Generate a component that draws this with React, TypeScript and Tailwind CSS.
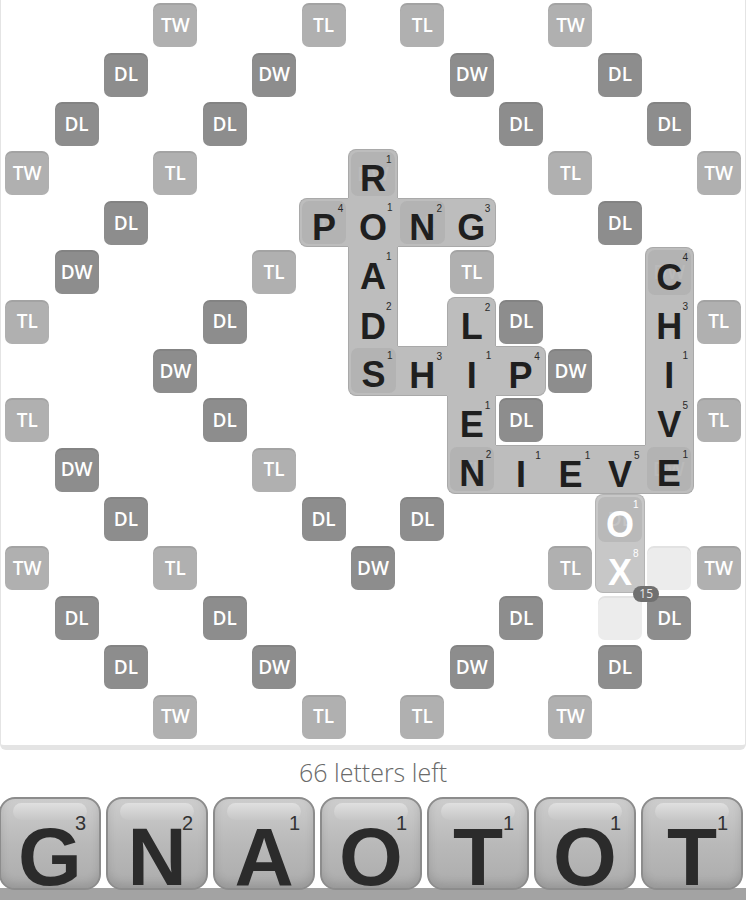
import clsx from 'clsx';

type Prem = 'TW' | 'TL' | 'DW' | 'DL' | 'ST';

interface Tile {
  l: string;
  v: number;
  fresh?: boolean;
}

const key = (r: number, c: number) => `${r},${c}`;

const premiums: Record<string, Prem> = {};
const addPrem = (p: Prem, list: [number, number][]) =>
  list.forEach(([r, c]) => (premiums[key(r, c)] = p));

addPrem('TW', [[0, 3], [0, 11], [3, 0], [3, 14], [11, 0], [11, 14], [14, 3], [14, 11]]);
addPrem('TL', [
  [0, 6], [0, 8], [3, 3], [3, 11], [5, 5], [5, 9], [6, 0], [6, 14],
  [8, 0], [8, 14], [9, 5], [9, 9], [11, 3], [11, 11], [14, 6], [14, 8],
]);
addPrem('DW', [
  [1, 5], [1, 9], [3, 7], [5, 1], [5, 13], [7, 3], [7, 11], [9, 1],
  [9, 13], [11, 7], [13, 5], [13, 9],
]);
addPrem('DL', [
  [1, 2], [1, 12], [2, 1], [2, 4], [2, 10], [2, 13], [4, 2], [4, 6],
  [4, 8], [4, 12], [6, 4], [6, 10], [8, 4], [8, 10], [10, 2], [10, 6],
  [10, 8], [10, 12], [12, 1], [12, 4], [12, 10], [12, 13], [13, 2], [13, 12],
]);
addPrem('ST', [[7, 7]]);

const tiles: Record<string, Tile> = {};
const place = (r: number, c: number, l: string, v: number, fresh = false) =>
  (tiles[key(r, c)] = { l, v, fresh });

place(3, 7, 'R', 1);
place(4, 6, 'P', 4);
place(4, 7, 'O', 1);
place(4, 8, 'N', 2);
place(4, 9, 'G', 3);
place(5, 7, 'A', 1);
place(6, 7, 'D', 2);
place(7, 7, 'S', 1);
place(7, 8, 'H', 3);
place(7, 9, 'I', 1);
place(7, 10, 'P', 4);
place(6, 9, 'L', 2);
place(8, 9, 'E', 1);
place(9, 9, 'N', 2);
place(9, 10, 'I', 1);
place(9, 11, 'E', 1);
place(9, 12, 'V', 5);
place(9, 13, 'E', 1);
place(5, 13, 'C', 4);
place(6, 13, 'H', 3);
place(7, 13, 'I', 1);
place(8, 13, 'V', 5);
place(10, 12, 'O', 1, true);
place(11, 12, 'X', 8, true);

const placeholders = new Set([key(11, 13), key(12, 12)]);

const rack: Tile[] = [
  { l: 'G', v: 3 },
  { l: 'N', v: 2 },
  { l: 'A', v: 1 },
  { l: 'O', v: 1 },
  { l: 'T', v: 1 },
  { l: 'O', v: 1 },
  { l: 'T', v: 1 },
];

function PremiumSquare({ p }: { p: Prem }) {
  if (p === 'ST') return null;
  const dark = p === 'DL' || p === 'DW';
  return (
    <div className="w-full h-full flex items-center justify-center">
      <div
        className={clsx(
          'w-[44px] h-[44px] rounded-[7px] flex items-center justify-center text-white text-[19px] font-semibold shadow-[inset_0_2px_0_rgba(0,0,0,0.07)]',
          dark ? 'bg-[#8d8d8d]' : 'bg-[#b0b0b0]'
        )}
        style={{ fontFamily: '"Open Sans", sans-serif' }}
      >
        {p}
      </div>
    </div>
  );
}

function TileCell({ r, c, t }: { r: number; c: number; t: Tile }) {
  const same = (rr: number, cc: number) => {
    const n = tiles[key(rr, cc)];
    return !!n && !!n.fresh === !!t.fresh;
  };
  const up = same(r - 1, c);
  const down = same(r + 1, c);
  const left = same(r, c - 1);
  const right = same(r, c + 1);
  const under = premiums[key(r, c)];

  return (
    <div
      className={clsx(
        'relative flex items-center justify-center pt-[10px]',
        t.fresh ? 'bg-[#c7c7c7] border-[#b4b4b4]' : 'bg-[#bdbdbd] border-[#a9a9a9]',
        !up && 'border-t',
        !down && 'border-b',
        !left && 'border-l',
        !right && 'border-r',
        !up && !left && 'rounded-tl-[8px]',
        !up && !right && 'rounded-tr-[8px]',
        !down && !left && 'rounded-bl-[8px]',
        !down && !right && 'rounded-br-[8px]'
      )}
      style={{ fontFamily: '"Liberation Sans", Arial, sans-serif' }}
    >
      {under && (
        <div
          className={clsx(
            'absolute inset-[2px] rounded-[7px] flex items-center justify-center text-[19px] font-semibold',
            t.fresh ? 'bg-[#b9b9b9] text-[#c4c4c4]' : 'bg-[#b3b3b3] text-[#bababa]'
          )}
          style={{ fontFamily: '"Open Sans", sans-serif' }}
        >
          {under === 'ST' ? '' : under}
        </div>
      )}
      <span
        className={clsx(
          'relative text-[36px] font-bold leading-none',
          t.fresh ? 'text-white' : 'text-[#1f1f1f]'
        )}
      >
        {t.l}
      </span>
      <span
        className={clsx(
          'absolute top-[5px] right-[5px] text-[10px] leading-none',
          t.fresh ? 'text-white' : 'text-[#2a2a2a]'
        )}
      >
        {t.v}
      </span>
      {t.l === 'X' && (
        <div
          className="absolute left-[37px] top-[42px] z-10 w-[26px] h-[16px] rounded-full bg-[#707070] text-[#e8e8e8] text-[12px] leading-none flex items-center justify-center"
          style={{ fontFamily: '"Open Sans", sans-serif' }}
        >
          15
        </div>
      )}
    </div>
  );
}

function Board() {
  const cells = [];
  for (let r = 0; r < 15; r++) {
    for (let c = 0; c < 15; c++) {
      const k = key(r, c);
      const t = tiles[k];
      if (t) {
        cells.push(<TileCell key={k} r={r} c={c} t={t} />);
      } else if (placeholders.has(k)) {
        cells.push(
          <div key={k} className="flex items-center justify-center">
            <div className="w-[44px] h-[44px] rounded-[7px] bg-[#ececec] shadow-[inset_0_2px_0_rgba(0,0,0,0.04)]" />
          </div>
        );
      } else if (premiums[k]) {
        cells.push(
          <div key={k}>
            <PremiumSquare p={premiums[k]} />
          </div>
        );
      } else {
        cells.push(<div key={k} />);
      }
    }
  }
  return (
    <div className="h-[750px] bg-white border-x border-b-[5px] border-[#e4e4e4] rounded-b-[6px] pl-[1.5px] pt-[0.5px]">
      <div className="grid grid-cols-[repeat(15,49.4px)] grid-rows-[repeat(15,49.4px)]">{cells}</div>
    </div>
  );
}

function RackTile({ t }: { t: Tile }) {
  return (
    <div
      className="relative w-[102px] h-[93px] shrink-0 rounded-[16px] border-2 border-[#8c8c8c] bg-linear-to-b from-[#cdcdcd] via-[#b9b9b9] to-[#acacac] shadow-[inset_0_-5px_8px_rgba(0,0,0,0.12)] overflow-hidden"
      style={{ fontFamily: '"Liberation Sans", Arial, sans-serif' }}
    >
      <div className="absolute left-[12px] right-[12px] top-[4px] h-[17px] rounded-[10px] bg-linear-to-b from-[#e0e0e0] to-[#c6c6c6]" />
      <div className="relative mt-[17px] text-center text-[82px] font-bold leading-none text-[#2b2b2b]">
        {t.l}
      </div>
      <span className="absolute top-[14px] right-[13px] text-[20px] leading-none text-[#333]">
        {t.v}
      </span>
    </div>
  );
}

export default function App() {
  return (
    <div className="w-[746px] h-[901px] bg-white overflow-hidden">
      <Board />
      <div
        className="h-[47px] flex items-center justify-center text-[25px] font-light text-[#6a6a6a] pb-[1px]"
        style={{ fontFamily: '"Open Sans", sans-serif' }}
      >
        66 letters left
      </div>
      <div className="flex gap-[5px] ml-[-1px]">
        {rack.map((t, i) => (
          <RackTile key={i} t={t} />
        ))}
      </div>
      <div className="h-[12px] bg-[#a3a3a3] -mt-[2px]" />
    </div>
  );
}
